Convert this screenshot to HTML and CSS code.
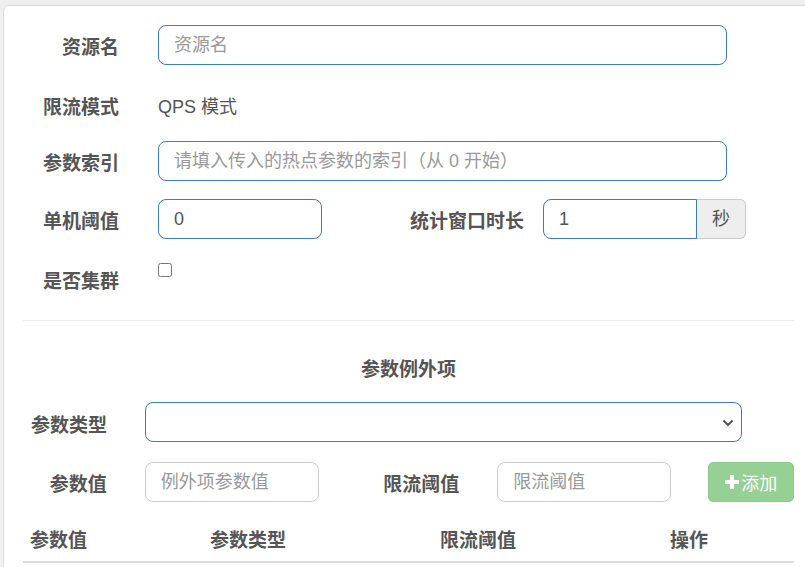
FILE: index.html
```html
<!DOCTYPE html>
<html lang="zh-CN">
<head>
<meta charset="utf-8">
<title>热点规则</title>
<link rel="stylesheet" href="styles.css">
</head>
<body>
<div class="panel">
  <div class="form-top">
    <div class="row">
      <label class="lbl">资源名</label>
      <input class="fc fc-wide" type="text" placeholder="资源名">
    </div>
    <div class="row row-static">
      <label class="lbl">限流模式</label>
      <div class="static">QPS 模式</div>
    </div>
    <div class="row">
      <label class="lbl">参数索引</label>
      <input class="fc fc-wide" type="text" placeholder="请填入传入的热点参数的索引（从 0 开始）">
    </div>
    <div class="row">
      <label class="lbl">单机阈值</label>
      <input class="fc fc-small" type="text" value="0">
      <label class="lbl lbl-mid">统计窗口时长</label>
      <div class="igroup">
        <input class="fc fc-group" type="text" value="1">
        <span class="addon">秒</span>
      </div>
    </div>
    <div class="row row-check">
      <label class="lbl">是否集群</label>
      <input class="chk" type="checkbox">
    </div>
  </div>

  <div class="divider"></div>

  <div class="sub-title">参数例外项</div>

  <div class="form-sub">
    <div class="row">
      <label class="lbl2">参数类型</label>
      <div class="select-wrap">
        <select class="fc fc-select"><option></option></select>
        <svg class="chev" width="12" height="8" viewBox="0 0 12 8"><path d="M1.5 1.5 L6 6 L10.5 1.5" fill="none" stroke="#555" stroke-width="2"/></svg>
      </div>
    </div>
    <div class="row">
      <label class="lbl2 lbl2-b">参数值</label>
      <input class="fc fc-gray" type="text" placeholder="例外项参数值">
      <label class="lbl2 lbl2-b lbl2-mid">限流阈值</label>
      <input class="fc fc-gray" type="text" placeholder="限流阈值">
      <button class="btn-add" type="button"><svg width="14" height="14" viewBox="0 0 14 14"><rect x="5" y="0" width="4" height="14" fill="#fff"/><rect x="0" y="5" width="14" height="4" fill="#fff"/></svg><span>添加</span></button>
    </div>
  </div>

  <table class="tbl">
    <thead>
      <tr>
        <th class="c1">参数值</th>
        <th class="c2">参数类型</th>
        <th class="c3">限流阈值</th>
        <th class="c4">操作</th>
      </tr>
    </thead>
  </table>
</div>
</body>
</html>
```

FILE: styles.css
```css
html, body {
  margin: 0;
  padding: 0;
  overflow: hidden;
}
body {
  background: #efefef;
  font-family: "Liberation Sans", "Noto Sans CJK SC", sans-serif;
  color: #555;
  font-size: 18px;
}
.panel {
  box-sizing: border-box;
  width: 811px;
  height: 562px;
  margin: 5px 0 0 3px;
  padding: 19px 19px 0 19px;
  background: #fff;
  border: 1px solid #ddd;
  border-bottom: none;
  border-radius: 6px 6px 0 0;
}
.form-top {
  display: flex;
  flex-direction: column;
  gap: 18px;
}
.row {
  display: flex;
  align-items: flex-start;
  height: 40px;
}
.lbl {
  box-sizing: border-box;
  width: 96px;
  margin-right: 39px;
  text-align: right;
  font-weight: bold;
  font-size: 19px;
  line-height: 40px;
  padding-top: 3px;
  white-space: nowrap;
  color: #555;
}
.row-static .lbl,
.row-check .lbl {
  padding-top: 5px;
}
.static {
  font-size: 18px;
  line-height: 40px;
  padding-top: 4px;
  color: #555;
}
.lbl-mid {
  width: 202px;
  margin-right: 19px;
}
.fc {
  box-sizing: border-box;
  height: 40px;
  border: 1px solid #3a7ebf;
  border-radius: 8px;
  padding: 0 15px;
  font-family: "Liberation Sans", "Noto Sans CJK SC", sans-serif;
  font-size: 18px;
  color: #555;
  background: #fff;
  outline: none;
  margin: 0;
}
.fc::placeholder {
  color: #999;
}
.fc-wide {
  width: 569px;
}
.fc-small {
  width: 164px;
}
.igroup {
  display: flex;
}
.fc-group {
  width: 154px;
  border-radius: 8px 0 0 8px;
}
.addon {
  box-sizing: border-box;
  width: 49px;
  height: 40px;
  line-height: 38px;
  text-align: center;
  background: #eee;
  border: 1px solid #ccc;
  border-left: none;
  border-radius: 0 6px 6px 0;
  font-size: 18px;
  color: #555;
}
.chk {
  width: 14px;
  height: 14px;
  margin: 6px 0 0 0;
}
.divider {
  height: 1px;
  background: #eee;
  margin-top: 23px;
}
.sub-title {
  margin-top: 37px;
  text-align: center;
  font-weight: bold;
  font-size: 19px;
  line-height: 24px;
  color: #555;
}
.form-sub {
  margin-top: 20px;
  display: flex;
  flex-direction: column;
  gap: 20px;
}
.lbl2 {
  box-sizing: border-box;
  width: 84px;
  margin-right: 38px;
  text-align: right;
  font-weight: bold;
  font-size: 19px;
  line-height: 40px;
  padding-top: 4px;
  white-space: nowrap;
  color: #555;
}
.lbl2-b {
  padding-top: 3px;
}
.lbl2-mid {
  width: 141px;
}
.select-wrap {
  position: relative;
  width: 597px;
  height: 40px;
}
.fc-select {
  width: 597px;
  appearance: none;
  -webkit-appearance: none;
}
.chev {
  position: absolute;
  right: 8px;
  top: 17px;
}
.fc-gray {
  width: 174px;
  border-color: #ccc;
}
.btn-add {
  box-sizing: border-box;
  width: 86px;
  height: 40px;
  margin-left: 37px;
  background: #95d095;
  border: 1px solid #8fcb8f;
  border-radius: 5px;
  color: #fff;
  font-family: "Liberation Sans", "Noto Sans CJK SC", sans-serif;
  font-size: 18px;
  display: flex;
  align-items: center;
  justify-content: center;
  gap: 2px;
  padding: 0;
}
.tbl {
  margin-top: 18px;
  width: 771px;
  border-collapse: collapse;
}
.tbl th {
  text-align: left;
  font-weight: bold;
  font-size: 19px;
  line-height: 24px;
  padding: 9px 7px 8px 7px;
  border-bottom: 2px solid #ddd;
  color: #555;
}
.tbl .c1 { width: 166px; }
.tbl .c2 { width: 216px; }
.tbl .c3 { width: 216px; }
```
